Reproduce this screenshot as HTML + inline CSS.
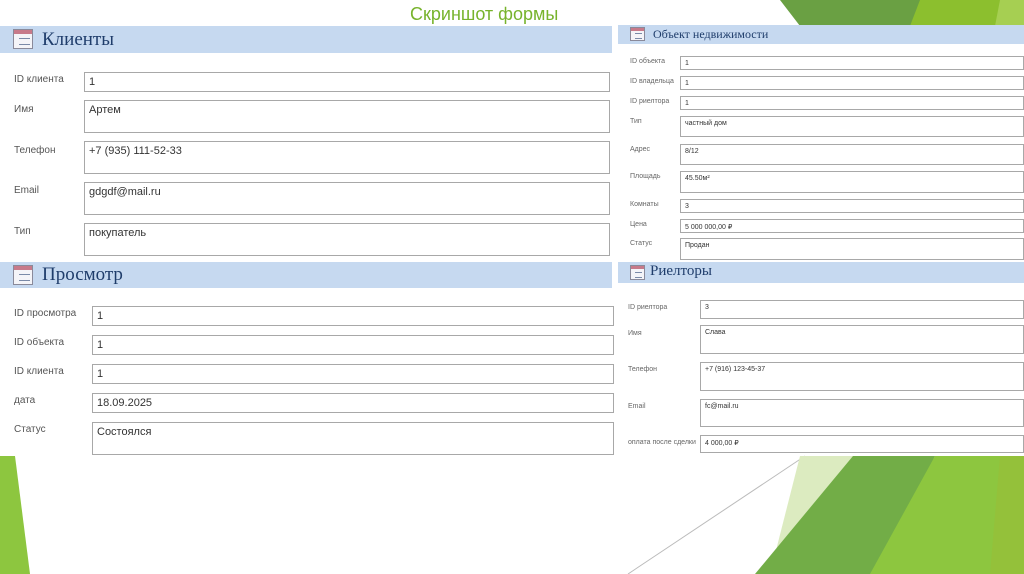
<!DOCTYPE html>
<html><head><meta charset="utf-8"><style>
*{margin:0;padding:0;box-sizing:border-box}
body{width:1024px;height:574px;position:relative;overflow:hidden;background:#fff;font-family:"Liberation Sans","DejaVu Sans",sans-serif}
.a{position:absolute}
.bar{position:absolute;background:#c6d9f0}
.bar span{position:absolute;font-family:"Liberation Serif","DejaVu Serif",serif;color:#1f3d6b}
.ic{position:absolute;border:1px solid #8a8a9a;background:#f4f4f8}
.ic:before{content:"";position:absolute;left:0;right:0;top:0;height:22%;background:#c77a8a}
.ic:after{content:"";position:absolute;left:30%;right:12%;top:45%;height:30%;border-top:1px solid #7a8aa8;border-bottom:1px solid #7a8aa8}
.in{position:absolute;border:1px solid #a8a8a8;background:#fff;color:#333;padding-left:4px}
.l{position:absolute;color:#555}
.L .l{font-size:10px}.L .in{font-size:11px;padding-top:3px}
.R .l{font-size:7px;color:#666}.R .in{font-size:7px;padding-top:3px}
</style></head><body>
<svg class="a" style="left:0;top:0" width="1024" height="574">
<polygon points="780,0 800,26 1024,26 1024,0" fill="#6aa043"/>
<polygon points="920,0 910,26 1024,26 1024,0" fill="#8cbf2e"/>
<polygon points="1000,0 995,26 1024,26 1024,0" fill="#a6cf52"/>
<polygon points="0,456 15,456 30,574 0,574" fill="#8dc63f"/>
<line x1="628" y1="574" x2="805" y2="456" stroke="#bbb" stroke-width="1"/>
<polygon points="800,456 855,456 790,574 770,574" fill="#dcebc0"/>
<polygon points="853,456 935,456 880,574 755,574" fill="#72ad47"/>
<polygon points="935,456 1024,456 1024,574 870,574" fill="#8dc63f"/>
<polygon points="1000,456 1024,456 1024,574 990,574" fill="#94c13a"/>
</svg>
<div class="a" style="left:410px;top:4px;font-size:18px;color:#77b32c">Скриншот формы</div>

<div class="L">
<div class="bar" style="left:0;top:26px;width:612px;height:27px"><div class="ic" style="left:13px;top:3px;width:20px;height:20px"></div><span style="left:42px;top:3px;font-size:19px">Клиенты</span></div>
<div class="l" style="left:14px;top:74px">ID клиента</div><div class="in" style="left:84px;top:72px;width:526px;height:20px">1</div>
<div class="l" style="left:14px;top:104px">Имя</div><div class="in" style="left:84px;top:100px;width:526px;height:33px">Артем</div>
<div class="l" style="left:14px;top:145px">Телефон</div><div class="in" style="left:84px;top:141px;width:526px;height:33px">+7 (935) 111-52-33</div>
<div class="l" style="left:14px;top:185px">Email</div><div class="in" style="left:84px;top:182px;width:526px;height:33px">gdgdf@mail.ru</div>
<div class="l" style="left:14px;top:226px">Тип</div><div class="in" style="left:84px;top:223px;width:526px;height:33px">покупатель</div>

<div class="bar" style="left:0;top:262px;width:612px;height:26px"><div class="ic" style="left:13px;top:3px;width:20px;height:20px"></div><span style="left:42px;top:2px;font-size:19px">Просмотр</span></div>
<div class="l" style="left:14px;top:308px">ID просмотра</div><div class="in" style="left:92px;top:306px;width:522px;height:20px">1</div>
<div class="l" style="left:14px;top:337px">ID объекта</div><div class="in" style="left:92px;top:335px;width:522px;height:20px">1</div>
<div class="l" style="left:14px;top:366px">ID клиента</div><div class="in" style="left:92px;top:364px;width:522px;height:20px">1</div>
<div class="l" style="left:14px;top:395px">дата</div><div class="in" style="left:92px;top:393px;width:522px;height:20px">18.09.2025</div>
<div class="l" style="left:14px;top:424px">Статус</div><div class="in" style="left:92px;top:422px;width:522px;height:33px">Состоялся</div>
</div>

<div class="R">
<div class="bar" style="left:618px;top:25px;width:406px;height:19px"><div class="ic" style="left:12px;top:2px;width:15px;height:14px"></div><span style="left:35px;top:2px;font-size:12px">Объект недвижимости</span></div>
<div class="l" style="left:630px;top:58px">ID объекта</div><div class="in" style="left:680px;top:56px;width:344px;height:14px">1</div>
<div class="l" style="left:630px;top:78px">ID владельца</div><div class="in" style="left:680px;top:76px;width:344px;height:14px">1</div>
<div class="l" style="left:630px;top:98px">ID риелтора</div><div class="in" style="left:680px;top:96px;width:344px;height:14px">1</div>
<div class="l" style="left:630px;top:118px">Тип</div><div class="in" style="left:680px;top:116px;width:344px;height:21px">частный дом</div>
<div class="l" style="left:630px;top:146px">Адрес</div><div class="in" style="left:680px;top:144px;width:344px;height:21px">8/12</div>
<div class="l" style="left:630px;top:173px">Площадь</div><div class="in" style="left:680px;top:171px;width:344px;height:22px">45.50м²</div>
<div class="l" style="left:630px;top:201px">Комнаты</div><div class="in" style="left:680px;top:199px;width:344px;height:14px">3</div>
<div class="l" style="left:630px;top:221px">Цена</div><div class="in" style="left:680px;top:219px;width:344px;height:14px">5 000 000,00 ₽</div>
<div class="l" style="left:630px;top:240px">Статус</div><div class="in" style="left:680px;top:238px;width:344px;height:22px">Продан</div>

<div class="bar" style="left:618px;top:262px;width:406px;height:21px"><div class="ic" style="left:12px;top:3px;width:15px;height:15px"></div><span style="left:32px;top:1px;font-size:15px">Риелторы</span></div>
<div class="l" style="left:628px;top:304px">ID риелтора</div><div class="in" style="left:700px;top:300px;width:324px;height:19px">3</div>
<div class="l" style="left:628px;top:330px">Имя</div><div class="in" style="left:700px;top:325px;width:324px;height:29px">Слава</div>
<div class="l" style="left:628px;top:366px">Телефон</div><div class="in" style="left:700px;top:362px;width:324px;height:29px">+7 (916) 123-45-37</div>
<div class="l" style="left:628px;top:403px">Email</div><div class="in" style="left:700px;top:399px;width:324px;height:28px">fc@mail.ru</div>
<div class="l" style="left:628px;top:439px">оплата после сделки</div><div class="in" style="left:700px;top:435px;width:324px;height:18px">4 000,00 ₽</div>
</div>
</body></html>
